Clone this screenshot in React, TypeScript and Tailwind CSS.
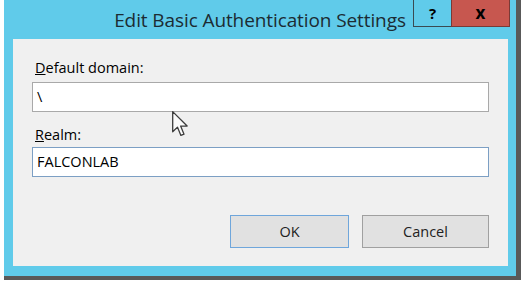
import React from "react";

const font = { fontFamily: '"Open Sans", "Noto Sans", sans-serif' };

const Cursor = () => (
  <svg
    className="absolute left-[172px] top-[111px]"
    width="17"
    height="26"
    viewBox="0 0 13 20"
  >
    <path
      d="M0.5 0.5 L0.5 16 L4.2 12.4 L6.8 18.8 L9.2 17.8 L6.6 11.6 L11.6 11.6 Z"
      fill="#fbfbfb"
      stroke="#3c3c3c"
      strokeWidth="1"
      strokeLinejoin="round"
    />
  </svg>
);

export default function App() {
  return (
    <div className="relative w-[525px] h-[282px] bg-white overflow-hidden" style={font}>
      {/* window frame */}
      <div className="ml-[4px] w-[517px] h-[280px] flex flex-col bg-[#60cbea] border-r-[5px] border-b-[4px] border-[#595959]">
        {/* title bar */}
        <div className="relative h-[39px] shrink-0 flex items-center justify-center">
          <span className="text-[19px] leading-none text-[#1c2b33] pt-[2px] tracking-[-0.1px]">
            Edit Basic Authentication Settings
          </span>
          <div className="absolute top-0 right-[6px] flex h-[27px]">
            <div className="w-[38px] flex items-center justify-center border-l border-b border-[#3a4a52] text-[15px] font-bold text-black">
              ?
            </div>
            <div className="w-[59px] flex items-center justify-center bg-[#c7574f] border-l border-b border-r border-[#7a3a36] text-[17px] font-bold text-black leading-none pb-[2px]">
              x
            </div>
          </div>
        </div>

        {/* client area */}
        <div className="flex-1 mb-[10px] ml-[9px] mr-[8px] bg-[#f0f0f0] px-[19px] pt-[19px] flex flex-col text-[14.5px] leading-[20px] text-black">
          <label className="pl-[3px]">
            <span className="underline">D</span>efault domain:
          </label>
          <div className="mt-[4px] h-[30px] bg-white border border-[#a9a9a9] flex items-center px-[4px]">
            \
          </div>

          <label className="pl-[3px] mt-[13px]">
            <span className="underline">R</span>ealm:
          </label>
          <div className="mt-[2px] h-[30px] bg-white border border-[#7c9fc4] flex items-center px-[4px]">
            FALCONLAB
          </div>

          <div className="mt-[38px] flex justify-end gap-[13px]">
            <button className="w-[119px] h-[33px] bg-[#e1e1e1] border border-[#6fa6db] text-[14.5px] text-[#222]">
              OK
            </button>
            <button className="w-[127px] h-[33px] bg-[#e1e1e1] border border-[#a0a0a0] text-[14.5px] text-[#222]">
              Cancel
            </button>
          </div>
        </div>
      </div>
      <Cursor />
    </div>
  );
}
